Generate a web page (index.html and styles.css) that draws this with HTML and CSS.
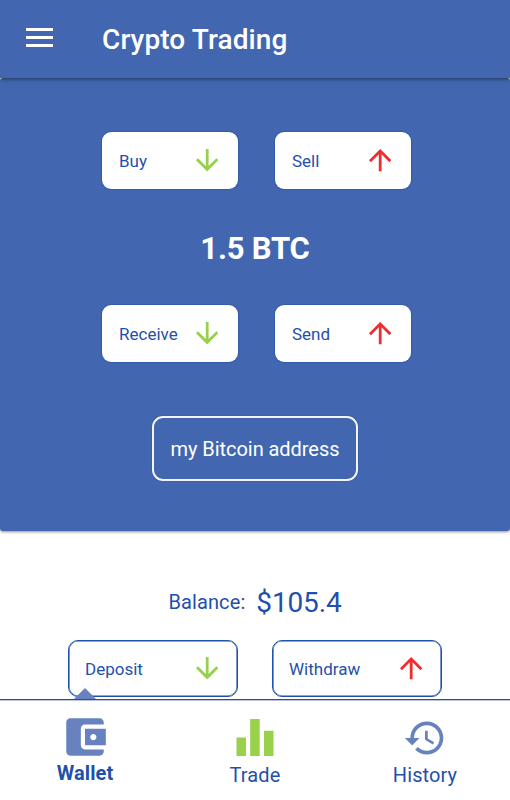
FILE: index.html
```html
<!DOCTYPE html>
<html lang="en">
<head>
<meta charset="utf-8">
<title>Crypto Trading</title>
<link rel="stylesheet" href="styles.css">
</head>
<body>
<svg class="defs" width="0" height="0">
  <symbol id="down" viewBox="4 4 16 16"><path d="M20 12l-1.41-1.41L13 16.17V4h-2v12.17l-5.58-5.59L4 12l8 8 8-8z"/></symbol>
  <symbol id="up" viewBox="4 4 16 16"><path d="M4 12l1.41 1.41L11 7.83V20h2V7.83l5.58 5.59L20 12l-8-8-8 8z"/></symbol>
</svg>
<div class="app">
  <header class="bar">
    <span class="menu"><i></i><i></i><i></i></span>
    <h1 class="title">Crypto Trading</h1>
  </header>
  <section class="panel">
    <div class="row">
      <button class="btn"><span>Buy</span><svg class="arrow green"><use href="#down"/></svg></button>
      <button class="btn"><span>Sell</span><svg class="arrow red"><use href="#up"/></svg></button>
    </div>
    <div class="amount"><span>1.5 BTC</span></div>
    <div class="row">
      <button class="btn"><span>Receive</span><svg class="arrow green"><use href="#down"/></svg></button>
      <button class="btn"><span>Send</span><svg class="arrow red"><use href="#up"/></svg></button>
    </div>
    <button class="address"><span>my Bitcoin address</span></button>
  </section>
  <main class="funds">
    <div class="balance"><span class="label">Balance:</span><span class="value">$105.4</span></div>
    <div class="row wide">
      <button class="btn outline"><span>Deposit</span><svg class="arrow green"><use href="#down"/></svg></button>
      <button class="btn outline"><span>Withdraw</span><svg class="arrow red"><use href="#up"/></svg></button>
    </div>
  </main>
  <nav class="tabs">
    <a class="tab active"><svg class="icon wallet" viewBox="0 0 24 24"><path d="M21 18v1c0 1.1-.9 2-2 2H5c-1.11 0-2-.9-2-2V5c0-1.1.89-2 2-2h14c1.1 0 2 .9 2 2v1h-9c-1.11 0-2 .9-2 2v8c0 1.1.89 2 2 2h9zm-9-2h10V8H12v8zm4-2.5c-.83 0-1.5-.67-1.5-1.5s.67-1.5 1.5-1.5 1.5.67 1.5 1.5-.67 1.5-1.5 1.5z"/></svg><span>Wallet</span></a>
    <a class="tab"><svg class="icon chart" viewBox="0 0 50 50"><path d="M6.500 25.500h9.500v18.500h-9.500zM20.200 7h9.500v37h-9.500zM34 18.800h9.500v25.200h-9.500z"/></svg><span>Trade</span></a>
    <a class="tab"><svg class="icon history" viewBox="0 0 24 24"><path d="M13 3c-4.970 0-9 4.030-9 9H1l3.890 3.890.070.140L9 12H6c0-3.870 3.130-7 7-7s7 3.130 7 7-3.130 7-7 7c-1.930 0-3.680-.790-4.940-2.060l-1.420 1.420C8.270 19.990 10.510 21 13 21c4.970 0 9-4.030 9-9s-4.030-9-9-9zm-1 5v5l4.280 2.540.720-1.210-3.500-2.080V8H12z"/></svg><span>History</span></a>
  </nav>
</div>
</body>
</html>
```
FILE: styles.css
```css
* { box-sizing: border-box; }
body { margin: 0; background: #fff; font-family: Roboto, "Liberation Sans", sans-serif; color: #1f50ab; }
button { font: inherit; color: inherit; margin: 0; }
.defs { position: absolute; }
.app { width: 510px; height: 800px; display: flex; flex-direction: column; overflow: hidden; }

.bar { flex: none; height: 78px; display: flex; align-items: center; padding-left: 26px; background: #4267b0; color: #fff; box-shadow: 0 1px 4px rgba(0,0,0,.5); position: relative; z-index: 1; }
.menu { width: 27px; height: 19px; display: flex; flex-direction: column; justify-content: space-between; margin: 0 49px 3px 0; }
.menu i { height: 3px; background: #fff; }
.title { margin: 2px 0 0; font-size: 28px; line-height: 32px; font-weight: 500; letter-spacing: .1px; }

.panel { flex: none; height: 453px; padding-top: 54px; background: #4267b0; border-radius: 3px; box-shadow: 0 1px 3px rgba(0,0,0,.45); display: flex; flex-direction: column; align-items: center; }
.row { display: flex; gap: 37px; padding-left: 3px; }
.btn { width: 136px; height: 57px; display: flex; align-items: center; justify-content: space-between; padding: 1px 19.800px 0 17px; border: 0; border-radius: 9px; background: #fff; font-size: 17px; box-shadow: 0 0 1.500px #00309a; }
.arrow { width: 22.400px; height: 22.400px; margin-bottom: 1px; flex: none; }
.green { fill: #97d04a; }
.red { fill: #f02c30; }
.amount { height: 116px; padding-top: 2px; display: flex; align-items: center; justify-content: center; color: #fff; font-size: 31px; font-weight: 700; letter-spacing: -.2px; }
.address { margin-top: 54px; width: 206px; height: 65px; border: 2px solid #f4f4f6; border-radius: 11px; background: none; color: #fff; font-size: 20px; letter-spacing: -.05px; padding: 0; box-shadow: 0 0 1px #00309a; }

.funds { flex: 1; min-height: 0; display: flex; flex-direction: column; align-items: center; padding-top: 55px; }
.balance { height: 54px; display: flex; align-items: center; gap: 11px; line-height: 32px; }
.label { font-size: 20px; letter-spacing: .1px; padding-bottom: 22px; }
.value { font-size: 28px; letter-spacing: -.15px; padding-bottom: 21px; }
.wide { gap: 34px; padding: 0; }
.outline { width: 170px; height: 57px; border: 1px solid #1f50ab; border-radius: 10px; box-shadow: inset 0 0 0 .600px #1f50ab; padding: 1px 18.500px 0 16px; }

.tabs { flex: none; height: 101px; display: flex; padding-top: 1px; border-top: 1px solid #1f50ab; box-shadow: inset 0 1px #bcc3df; position: relative; background: #fff; }
.tab { width: 170px; display: flex; flex-direction: column; align-items: center; font-size: 20px; line-height: 24px; letter-spacing: .1px; }
.active { font-weight: 700; }
.active::before { content: ""; position: absolute; left: 74px; top: -12px; border: 11px solid transparent; border-top: 0; border-bottom-color: #6782bf; }
.icon { width: 50px; height: 50px; margin: 12px 0 0; fill: #6782bf; }
.wallet { margin: 11px 0 -1px; }
.chart { margin: 11px 0 1px; fill: #9ad14b; }
.history { width: 44px; height: 44px; margin: 15px 0 3px; }
```
